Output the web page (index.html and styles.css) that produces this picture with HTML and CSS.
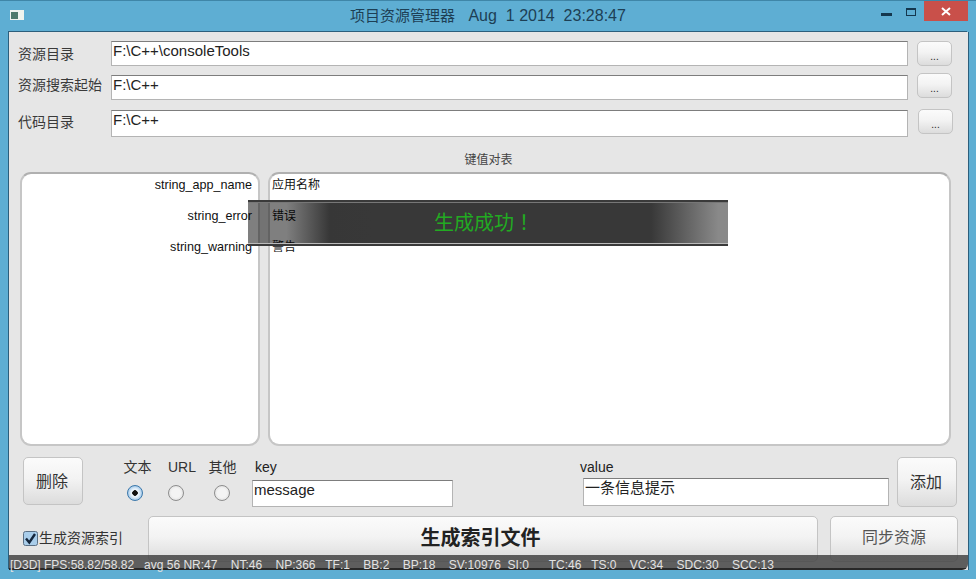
FILE: index.html
```html
<!DOCTYPE html>
<html lang="zh-CN">
<head>
    <meta charset="UTF-8">
    <title>项目资源管理器</title>
    <link rel="stylesheet" href="styles.css">
</head>
<body>
    <div class="window">
        <div class="titlebar">
            <div class="app-icon"><span class="app-icon-mark"></span></div>
            <div class="title">项目资源管理器<span class="title-build">   Aug  1 2014  23:28:47</span></div>
            <div class="win-min"></div>
            <div class="win-max"></div>
            <div class="win-close">
                <svg width="10" height="9" viewBox="0 0 10 9"><path d="M1 1L9 8M9 1L1 8" stroke="#fff" stroke-width="2"/></svg>
            </div>
        </div>

        <div class="client">
            <div class="path-row path-row-1">
                <div class="path-label">资源目录</div>
                <input class="field path-field" value="F:\C++\consoleTools">
                <div class="btn browse-btn">...</div>
            </div>
            <div class="path-row path-row-2">
                <div class="path-label">资源搜索起始</div>
                <input class="field path-field" value="F:\C++">
                <div class="btn browse-btn">...</div>
            </div>
            <div class="path-row path-row-3">
                <div class="path-label">代码目录</div>
                <input class="field path-field path-field-tall" value="F:\C++">
                <div class="btn browse-btn">...</div>
            </div>

            <div class="caption">键值对表</div>

            <div class="lists">
                <div class="list list-keys">
                    <div class="list-item">string_app_name</div>
                    <div class="list-item">string_error</div>
                    <div class="list-item">string_warning</div>
                </div>
                <div class="list list-values">
                    <div class="list-item">应用名称</div>
                    <div class="list-item">错误</div>
                    <div class="list-item">警告</div>
                </div>
            </div>

            <div class="editor">
                <div class="btn action-btn">删除</div>
                <div class="radios">
                    <div class="radio-item">
                        <div class="radio-label">文本</div>
                        <span class="radio radio-on"></span>
                    </div>
                    <div class="radio-item">
                        <div class="radio-label">URL</div>
                        <span class="radio"></span>
                    </div>
                    <div class="radio-item">
                        <div class="radio-label">其他</div>
                        <span class="radio"></span>
                    </div>
                </div>
                <div class="key-group">
                    <div class="group-label">key</div>
                    <input class="field key-field" value="message">
                </div>
                <div class="value-group">
                    <div class="group-label">value</div>
                    <input class="field value-field" value="一条信息提示">
                </div>
                <div class="btn action-btn add-btn">添加</div>
            </div>

            <div class="footer">
                <div class="check">
                    <svg class="check-box" width="15" height="15" viewBox="0 0 15 15">
                        <rect x="0.5" y="0.5" width="14" height="14" rx="2" fill="#a9cdea" stroke="#5a6f84"/>
                        <path d="M3 7.5L6.3 11.5L12 3" fill="none" stroke="#14263c" stroke-width="2.4"/>
                    </svg>
                    <span>生成资源索引</span>
                </div>
                <div class="btn build-btn">生成索引文件</div>
                <div class="btn sync-btn">同步资源</div>
            </div>

            <div class="stats">[D3D] FPS:58.82/58.82   avg 56 NR:47    NT:46    NP:366   TF:1    BB:2    BP:18    SV:10976  SI:0      TC:46   TS:0    VC:34    SDC:30    SCC:13</div>
        </div>

        <div class="toast" lang="zh-TW">生成成功！</div>
    </div>
</body>
</html>
```

FILE: styles.css
```css
html,
body {
    margin: 0;
    width: 976px;
    height: 579px;
    overflow: hidden;
}

body {
    font-family: "Liberation Sans", "Noto Sans CJK SC", sans-serif;
    color: #222;
}

.window {
    position: relative;
    display: flex;
    flex-direction: column;
    height: 579px;
    background-color: #5eaed3;
    border-top: 1px solid #3f86a8;
    box-sizing: border-box;
}

/* title bar */
.titlebar {
    position: relative;
    display: flex;
    flex: none;
    height: 31px;
    align-items: flex-start;
}

.app-icon {
    width: 14px;
    height: 10px;
    margin: 9px 0 0 10px;
    background-color: #eef3ee;
}

.app-icon-mark {
    display: block;
    width: 7px;
    height: 7px;
    margin: 2px 0 0 1px;
    background-color: #4d7a6c;
}

.title {
    position: absolute;
    left: 0;
    right: 0;
    top: 6px;
    font-size: 15px;
    line-height: 18px;
    text-align: center;
    white-space: pre;
    color: #1d3f55;
}

.title-build {
    font-size: 16px;
}

.win-min {
    width: 11px;
    height: 3px;
    margin: 12px 0 0 857px;
    background-color: #14374e;
}

.win-max {
    width: 8px;
    height: 5px;
    margin: 7px 0 0 14px;
    border: 1px solid #14374e;
    border-top-width: 2px;
}

.win-close {
    display: flex;
    width: 44px;
    height: 20px;
    margin-left: 8px;
    align-items: center;
    justify-content: center;
    background-color: #c9504a;
}

/* client area */
.client {
    position: relative;
    flex: 1;
    margin: 0 8px 9px 9px;
    background-color: #e6e6e6;
    box-shadow: -1px -1px 0 #2c5f7c, 1px 0 0 #2c5f7c;
}

.path-row {
    display: flex;
    margin-left: 9px;
    align-items: flex-start;
}

.path-row-1 {
    padding-top: 9px;
}

.path-row-2 {
    margin-top: 9px;
}

.path-row-3 {
    margin-top: 10px;
}

.path-label {
    width: 93px;
    padding-top: 4px;
    font-size: 14px;
    line-height: 18px;
    color: #3a3a3a;
}

.path-row-2 .path-label {
    padding-top: 1px;
}

.path-row-3 .path-label {
    padding-top: 3px;
}

.field {
    display: block;
    box-sizing: border-box;
    margin: 0;
    background-color: #fff;
    border: 1px solid #b4b4b4;
    border-top-color: #7d7d7d;
    border-radius: 0;
    outline: none;
    font-family: "Liberation Sans", "Noto Sans CJK SC", sans-serif;
    font-size: 15px;
    color: #222;
}

.path-field {
    width: 797px;
    height: 25px;
    padding: 0 1px 7px 1px;
}

.path-field-tall {
    height: 27px;
    padding-bottom: 9px;
}

.btn {
    box-sizing: border-box;
    display: flex;
    align-items: center;
    justify-content: center;
    background: linear-gradient(#fbfbfb, #f3f3f3 45%, #dcdcdc);
    border: 1px solid #c4c4c4;
    border-radius: 5px;
}

.browse-btn {
    width: 35px;
    height: 25px;
    margin-left: 9px;
    padding-top: 6px;
    font-size: 10px;
}

.path-row-2 .browse-btn {
    margin-top: -2px;
}

.path-row-3 .browse-btn {
    margin-top: -1px;
    margin-left: 10px;
}

.caption {
    margin-top: 15px;
    font-size: 12px;
    line-height: 16px;
    text-align: center;
    color: #444;
}

/* key and value lists */
.lists {
    display: flex;
    gap: 8px;
    height: 274px;
    margin: 4px 17px 0 11px;
}

.list {
    box-sizing: border-box;
    background-color: #fff;
    border: 2px solid #c6c6c6;
    border-top-color: #b0b0b0;
    border-radius: 11px;
    padding-top: 3px;
}

.list-keys {
    width: 240px;
    text-align: right;
    font-size: 12.6px;
}

.list-values {
    flex: 1;
    padding-left: 2px;
    font-size: 12px;
}

.list-keys .list-item {
    padding-right: 6px;
}

.list-item {
    height: 31px;
    line-height: 17px;
    color: #111;
}

/* editor row */
.editor {
    display: flex;
    margin: 11px 0 0 14px;
    align-items: flex-start;
}

.action-btn {
    width: 60px;
    height: 48px;
    padding: 0 2px 2px 0;
    font-size: 16px;
    color: #333;
}

.add-btn {
    height: 50px;
    margin-left: 8px;
}

.radios {
    display: flex;
    margin-left: 30px;
    width: 139px;
}

.radio-item {
    display: flex;
    flex-direction: column;
    align-items: center;
    width: 44px;
}

.radio-item:nth-child(2) {
    width: 38px;
}

.radio-item:nth-child(3) {
    width: 54px;
}

.radio-label {
    height: 28px;
    font-size: 14px;
    line-height: 20px;
    color: #333;
}

.radio-item:nth-child(1) .radio-label {
    margin-left: 5px;
}

.radio-item:nth-child(2) .radio-label {
    margin-left: 12px;
}

.radio-item:nth-child(3) .radio-label {
    margin-left: 1px;
}

.radio {
    box-sizing: border-box;
    display: block;
    width: 16px;
    height: 16px;
    border: 1px solid #8d8d8d;
    border-radius: 50%;
    background: radial-gradient(circle, #f4f4f4 45%, #d5d5d5);
}

.radio-on {
    border-color: #3b78ab;
    background: radial-gradient(circle, #111 0 2.5px, #e8f2fb 3px 4px, #a7cbea 7px);
}

.key-group,
.value-group {
    display: flex;
    flex-direction: column;
}

.key-group {
    width: 328px;
}

.group-label {
    height: 21px;
    padding-left: 3px;
    font-size: 14px;
    line-height: 20px;
    color: #222;
}

.value-group .group-label {
    padding-left: 0;
}

.key-field {
    width: 201px;
    height: 27px;
    margin-top: 2px;
    padding: 0 1px 9px 1px;
}

.value-field {
    width: 306px;
    height: 28px;
    margin-left: 3px;
    padding: 0 1px 12px 1px;
}

/* footer row */
.footer {
    display: flex;
    margin: 9px 0 0 14px;
    align-items: flex-start;
}

.check {
    display: flex;
    width: 125px;
    padding-top: 12px;
    align-items: center;
    gap: 1px;
    font-size: 14px;
    line-height: 20px;
    color: #333;
}

.check-box {
    flex: none;
}

.build-btn {
    width: 670px;
    height: 46px;
    padding: 0 5px 6px 0;
    font-size: 20px;
    font-weight: bold;
    color: #222;
}

.sync-btn {
    width: 128px;
    height: 46px;
    margin-left: 12px;
    padding-bottom: 6px;
    font-size: 16px;
    color: #555;
}

/* overlays */
.stats {
    position: absolute;
    left: 0;
    right: 0;
    bottom: 0;
    box-sizing: border-box;
    height: 15px;
    padding: 3px 0 0 1px;
    background: linear-gradient(rgba(60, 60, 60, 0.8) 86%, rgba(30, 30, 30, 0.95) 90%);
    border-bottom-right-radius: 6px;
    font-size: 12px;
    line-height: 15px;
    white-space: pre;
    color: #e2e2e2;
}

.toast {
    position: absolute;
    left: 248px;
    top: 199px;
    box-sizing: border-box;
    width: 480px;
    height: 46px;
    padding-left: 186px;
    background: linear-gradient(90deg, rgba(0, 0, 0, 0.5), rgba(0, 0, 0, 0.5) 8%, rgba(20, 20, 20, 0.85) 17%, #383838 26%, #383838 84%, rgba(40, 40, 40, 0.55) 98%);
    border-top: 2px solid #3a3a3a;
    border-bottom: 2px solid #3a3a3a;
    box-shadow: inset 0 -1px 0 #bbb, inset 0 1px 0 #777;
    font-family: "Noto Sans CJK TC", sans-serif;
    font-size: 20px;
    line-height: 40px;
    color: #22aa22;
}
```
